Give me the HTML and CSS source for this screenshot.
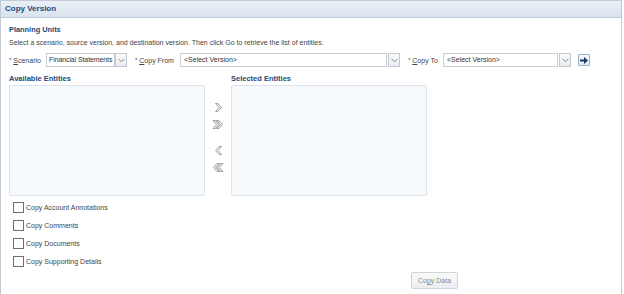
FILE: index.html
```html
<!DOCTYPE html>
<html lang="en">
<head>
    <meta charset="UTF-8">
    <title>Copy Version</title>
    <link rel="stylesheet" href="styles.css">
</head>
<body>

    <div class="dialog">
        <!-- Titelbalk -->
        <div class="dialog-title">Copy Version</div>

        <div class="dialog-body">
            <div class="section-title">Planning Units</div>
            <p class="hint">Select a scenario, source version, and destination version. Then click Go to retrieve the list of entities.</p>

            <!-- Keuzelijsten -->
            <div class="select-row">
                <label class="field f-scenario"><span class="req">*</span> <u>S</u>cenario</label>
                <div class="select scenario">
                    <span class="select-value">Financial Statements</span>
                    <span class="select-btn"><svg width="7" height="5" viewBox="0 0 7 5"><path d="M0.5 0.8 L3.5 3.8 L6.5 0.8" fill="none" stroke="#7b8794" stroke-width="1"/></svg></span>
                </div>

                <label class="field f-from"><span class="req">*</span> <u>C</u>opy From</label>
                <div class="select copy-from">
                    <span class="select-value">&lt;Select Version&gt;</span>
                    <span class="select-btn"><svg width="7" height="5" viewBox="0 0 7 5"><path d="M0.5 0.8 L3.5 3.8 L6.5 0.8" fill="none" stroke="#7b8794" stroke-width="1"/></svg></span>
                </div>

                <label class="field f-to"><span class="req">*</span> <u>C</u>opy To</label>
                <div class="select copy-to">
                    <span class="select-value">&lt;Select Version&gt;</span>
                    <span class="select-btn"><svg width="7" height="5" viewBox="0 0 7 5"><path d="M0.5 0.8 L3.5 3.8 L6.5 0.8" fill="none" stroke="#7b8794" stroke-width="1"/></svg></span>
                </div>

                <button class="go-btn" title="Go"><svg width="8" height="7" viewBox="0 0 8 7"><path d="M0 2.5 H4 V0 L8 3.5 L4 7 V4.5 H0 Z" fill="#1b3a66"/></svg></button>
            </div>

            <!-- Entiteiten -->
            <div class="shuttle">
                <div class="shuttle-col">
                    <div class="list-label">Available Entities</div>
                    <div class="list-box"></div>
                </div>

                <div class="shuttle-buttons">
                    <svg class="chev" width="9" height="9" viewBox="0 0 9 9"><path d="M1.5 0.5 H4 L7.5 4.5 L4 8.5 H1.5 L5 4.5 Z" fill="#eeeeee" stroke="#8e8e8e" stroke-width="0.8"/></svg>
                    <svg class="chev" width="12" height="9" viewBox="0 0 12 9"><path d="M1 0.5 H3.5 L7 4.5 L3.5 8.5 H1 L4.5 4.5 Z" fill="#eeeeee" stroke="#8e8e8e" stroke-width="0.8"/><path d="M4.5 0.5 H7 L10.5 4.5 L7 8.5 H4.5 L8 4.5 Z" fill="#eeeeee" stroke="#8e8e8e" stroke-width="0.8"/></svg>
                    <svg class="chev gap" width="9" height="9" viewBox="0 0 9 9"><path d="M7.5 0.5 H5 L1.5 4.5 L5 8.5 H7.5 L4 4.5 Z" fill="#eeeeee" stroke="#8e8e8e" stroke-width="0.8"/></svg>
                    <svg class="chev" width="12" height="9" viewBox="0 0 12 9"><path d="M11 0.5 H8.5 L5 4.5 L8.5 8.5 H11 L7.5 4.5 Z" fill="#eeeeee" stroke="#8e8e8e" stroke-width="0.8"/><path d="M7.5 0.5 H5 L1.5 4.5 L5 8.5 H7.5 L4 4.5 Z" fill="#eeeeee" stroke="#8e8e8e" stroke-width="0.8"/></svg>
                </div>

                <div class="shuttle-col">
                    <div class="list-label">Selected Entities</div>
                    <div class="list-box"></div>
                </div>
            </div>

            <!-- Opties -->
            <div class="options">
                <label class="option"><span class="box"></span>Copy Account Annotations</label>
                <label class="option"><span class="box"></span>Copy Comments</label>
                <label class="option"><span class="box"></span>Copy Documents</label>
                <label class="option"><span class="box"></span>Copy Supporting Details</label>
            </div>

            <div class="actions">
                <button class="copy-btn">Co<u>p</u>y Data</button>
            </div>
        </div>
    </div>

</body>
</html>
```

FILE: styles.css
```css
body {
    font-family: "Liberation Sans", Arial, sans-serif;
    font-size: 7px;
    color: #333;
    margin: 0;
    padding: 0;
    background-color: #fff;
}

/* Dialoog */
.dialog {
    width: 620px;
    height: 294px;
    border-left: 1px solid #c3cbd5;
    border-right: 1px solid #c3cbd5;
}

.dialog-title {
    height: 16px;
    line-height: 16px;
    padding-left: 4px;
    font-size: 8px;
    font-weight: bold;
    color: #1f4a78;
    background: linear-gradient(#e9eff6, #d9e3ee);
    border-top: 1px solid #c3cbd5;
    border-bottom: 1px solid #bcc8d6;
}

.dialog-body {
    padding: 5px 0 0 8px;
}

.section-title {
    font-size: 7.4px;
    font-weight: bold;
    color: #1f4a78;
    height: 13px;
    line-height: 13px;
}

.hint {
    margin: 1px 0 0;
    height: 12px;
    line-height: 12px;
    color: #444;
}

/* Keuzelijsten */
.select-row {
    display: flex;
    align-items: center;
    height: 14px;
    margin-top: 4px;
}

.field {
    color: #444;
    white-space: nowrap;
}

.f-scenario { width: 37px; }
.f-from { width: 45px; }
.f-to { width: 35px; }

.req {
    color: #1f4a78;
    font-size: 6px;
    vertical-align: 1px;
}

.select {
    display: flex;
    align-items: center;
}

.select-value {
    height: 12px;
    line-height: 12px;
    padding-left: 3px;
    border: 1px solid #c7ced6;
    background-color: #fff;
    color: #333;
    white-space: nowrap;
    overflow: hidden;
}

.select-btn {
    display: flex;
    align-items: center;
    justify-content: center;
    width: 10px;
    height: 12px;
    margin-left: 1px;
    border: 1px solid #c2c8cf;
    background: linear-gradient(#fbfbfb, #e9ecef);
}

.scenario .select-value {
    width: 65px;
    padding-left: 2px;
    letter-spacing: -0.1px;
}
.scenario .select-btn { margin-left: 0; }
.copy-from .select-value { width: 202px; }
.copy-to .select-value { width: 110px; }

.scenario { margin-right: 8px; }
.copy-from { margin-right: 8px; }
.copy-to { margin-right: 7px; }

.go-btn {
    display: flex;
    align-items: center;
    justify-content: center;
    width: 12px;
    height: 12px;
    padding: 0;
    border: 1px solid #9fb0c3;
    border-radius: 1px;
    background: linear-gradient(#f7fafd, #dfe8f2);
}

/* Entiteiten */
.shuttle {
    display: flex;
    margin-top: 6px;
}

.shuttle-col {
    display: flex;
    flex-direction: column;
}

.list-label {
    font-size: 7.5px;
    font-weight: bold;
    color: #1f4a78;
    height: 11px;
    line-height: 11px;
}

.list-box {
    width: 194px;
    height: 109px;
    margin-top: 1px;
    border: 1px solid #dde3ea;
    border-radius: 2px;
    background-color: #f7fafd;
}

.shuttle-buttons {
    width: 26px;
    display: flex;
    flex-direction: column;
    align-items: center;
    padding-top: 30px;
}

.chev {
    margin-bottom: 8px;
}

.chev.gap {
    margin-top: 9px;
}

/* Opties */
.options {
    display: flex;
    flex-direction: column;
    gap: 7px;
    margin-top: 6px;
    padding-left: 4px;
}

.option {
    display: flex;
    align-items: center;
    height: 11px;
    color: #444;
}

.box {
    width: 9px;
    height: 9px;
    margin-right: 2px;
    border: 1px solid #6f6f6f;
    background-color: #fff;
}

.actions {
    padding-left: 402px;
    margin-top: 5px;
}

.copy-btn {
    width: 47px;
    height: 17px;
    padding: 0;
    font-family: "Liberation Sans", Arial, sans-serif;
    font-size: 7px;
    color: #8a8a8a;
    border: 1px solid #cfd3d7;
    border-radius: 2px;
    background: linear-gradient(#fafafa, #eceef0);
}
```
